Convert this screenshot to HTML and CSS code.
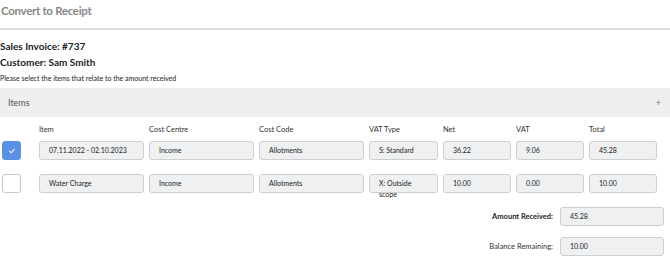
FILE: index.html
```html
<!DOCTYPE html>
<html lang="en">
<head>
  <meta charset="UTF-8">
  <meta name="viewport" content="width=device-width, initial-scale=1.0">
  <title>Convert to Receipt</title>
  <link rel="stylesheet" href="styles.css">
</head>
<body>
  <div class="page-title">Convert to Receipt</div>

  <h3 class="info">Sales Invoice: #737</h3>
  <h3 class="info">Customer: Sam Smith</h3>
  <p class="hint">Please select the items that relate to the amount received</p>

  <div class="panel-head">
    <span>Items</span>
    <span class="plus">+</span>
  </div>

  <div class="grid labels">
    <div></div>
    <div>Item</div>
    <div>Cost Centre</div>
    <div>Cost Code</div>
    <div>VAT Type</div>
    <div>Net</div>
    <div>VAT</div>
    <div>Total</div>
  </div>

  <div class="grid item-row">
    <div><span class="check checked">
      <svg viewBox="0 0 10 10" width="8" height="8"><path d="M2 5.2 L4.1 7.2 L8 3" fill="none" stroke="#fff" stroke-width="1.3" stroke-linecap="round" stroke-linejoin="round"/></svg>
    </span></div>
    <div class="field">07.11.2022 - 02.10.2023</div>
    <div class="field">Income</div>
    <div class="field">Allotments</div>
    <div class="field">S: Standard</div>
    <div class="field">36.22</div>
    <div class="field">9.06</div>
    <div class="field">45.28</div>
  </div>

  <div class="grid item-row">
    <div><span class="check"></span></div>
    <div class="field">Water Charge</div>
    <div class="field">Income</div>
    <div class="field">Allotments</div>
    <div class="field wrap">X: Outside scope</div>
    <div class="field">10.00</div>
    <div class="field">0.00</div>
    <div class="field">10.00</div>
  </div>

  <div class="totals">
    <div class="total-row">
      <label class="strong">Amount Received:</label>
      <div class="field total-field">45.28</div>
    </div>
    <div class="total-row">
      <label>Balance Remaining:</label>
      <div class="field total-field">10.00</div>
    </div>
  </div>
</body>
</html>
```

FILE: styles.css
```css
body {
  font-family: Lato, "Open Sans", sans-serif;
  margin: 0;
  padding: 0;
  background: #fff;
  color: #222;
}
.page-title {
  height: 28px;
  line-height: 22px;
  font-size: 11.5px;
  font-weight: 700;
  letter-spacing: -0.3px;
  color: #888;
  padding-left: 1px;
  border-bottom: 2px solid #d9dde1;
}
.info {
  margin: 0;
  font-size: 10px;
  font-weight: 700;
  height: 16px;
  line-height: 16px;
}
.info:first-of-type {
  margin-top: 8px;
}
.hint {
  margin: 0;
  font-size: 7px;
  line-height: 16px;
  color: #222;
}
.panel-head {
  margin-top: 2px;
  height: 29px;
  background: #efefef;
  display: flex;
  align-items: center;
  justify-content: space-between;
  padding: 0 8px;
  font-size: 9px;
  color: #555;
}
.plus {
  color: #777;
  font-size: 9px;
  margin-right: 1px;
}
.grid {
  display: grid;
  grid-template-columns: 34px 105px 105px 105px 69px 68px 68px 68px;
  column-gap: 5px;
}
.labels {
  margin-top: 7px;
  height: 17px;
  line-height: 12px;
  font-size: 7.5px;
  color: #333;
}
.item-row {
  height: 33px;
}
.check {
  display: flex;
  align-items: center;
  justify-content: center;
  box-sizing: border-box;
  width: 19px;
  height: 19px;
  margin-left: 2px;
  border: 1px solid #c8c8c8;
  border-radius: 3px;
  background: #fff;
}
.check.checked {
  background: #5b91e2;
  border-color: #5b91e2;
}
.field {
  box-sizing: border-box;
  height: 19px;
  padding: 0 9px;
  background: #eef0f1;
  border: 1px solid #cdd0d2;
  border-radius: 3px;
  font-size: 7px;
  line-height: 17px;
  color: #222;
  white-space: nowrap;
}
.field.wrap {
  white-space: normal;
  line-height: 11px;
  padding-top: 3px;
  padding-right: 20px;
}
.totals {
  display: flex;
  flex-direction: column;
  align-items: flex-end;
  padding-right: 6px;
  row-gap: 11px;
}
.total-row {
  display: flex;
  align-items: center;
  column-gap: 7px;
}
.total-row label {
  font-size: 7.5px;
  color: #333;
}
.total-row label.strong {
  font-weight: 700;
  color: #222;
}
.total-field {
  width: 104px;
}
```
